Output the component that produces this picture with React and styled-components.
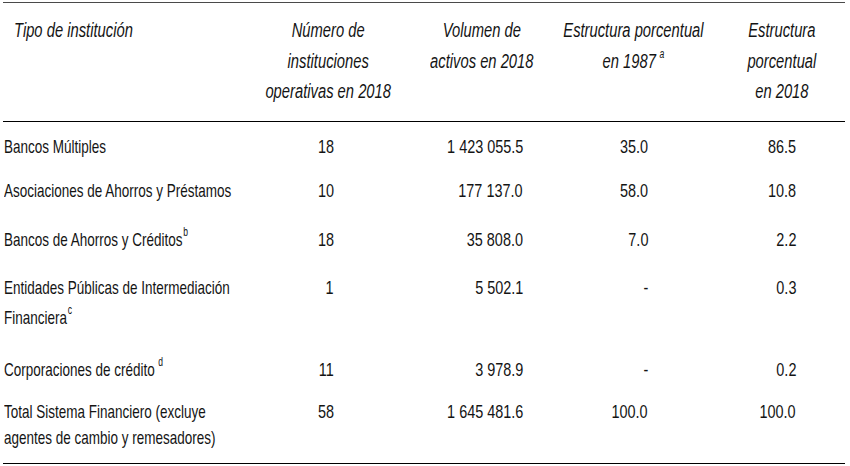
import React from "react";
import styled, { createGlobalStyle } from "styled-components";

const GlobalStyle = createGlobalStyle`
  body {
    margin: 0;
    background: #ffffff;
    color: #141414;
    font-family: "Liberation Sans", Arial, sans-serif;
  }
`;

const COLS = "250px 150px 164px 132px 146px";

const Table = styled.div`
  width: 842px;
  padding: 2px 5px 0 3px;
`;

const HeaderRow = styled.div`
  display: grid;
  grid-template-columns: ${COLS};
  border-top: 1px solid #4a4a4a;
  border-bottom: 1px solid #000;
  padding: 12px 0 14px;
  line-height: 30.5px;
  font-size: 20.5px;
  font-style: italic;
`;

const HeadCell = styled.div`
  display: flex;
  align-items: flex-start;
  justify-content: ${(p) => (p.$align === "left" ? "flex-start" : "center")};
  text-align: ${(p) => p.$align || "center"};
  padding-left: ${(p) => p.$pl || 0}px;
  padding-right: ${(p) => p.$pr || 0}px;
  min-width: 0;
`;

// condensed face: the table is set in a narrow grotesque
const Squeeze = styled.span`
  display: inline-block;
  flex-shrink: 0;
  white-space: nowrap;
  transform: scaleX(${(p) => p.$sx || 0.71});
  transform-origin: ${(p) => p.$origin || "center"};
`;

const Body = styled.div`
  border-bottom: 1px solid #000;
`;

const Row = styled.div`
  display: grid;
  grid-template-columns: ${COLS};
  padding: ${(p) => p.$pt}px 0 ${(p) => p.$pb}px;
  line-height: ${(p) => p.$lh || 26}px;
  font-size: 19px;
`;

const Name = styled.div`
  padding-left: 1px;
`;

const Num = styled.div`
  text-align: right;
  padding-right: ${(p) => p.$pr}px;
`;

const Sup = styled.sup`
  font-size: 12px;
  line-height: 0;
  vertical-align: 0;
  position: relative;
  top: -0.8em;
  margin-left: ${(p) => (p.$gap ? 5 : 1)}px;
`;

const PADS = [69, 44, 51, 49];

const rows = [
  { name: "Bancos Múltiples", vals: ["18", "1 423 055.5", "35.0", "86.5"], pt: 12, pb: 6 },
  { name: "Asociaciones de Ahorros y Préstamos", vals: ["10", "177 137.0", "58.0", "10.8"], pt: 12, pb: 11 },
  {
    name: (
      <>
        Bancos de Ahorros y Créditos<Sup>b</Sup>
      </>
    ),
    vals: ["18", "35 808.0", "7.0", "2.2"],
    pt: 12,
    pb: 10,
  },
  {
    name: (
      <>
        Entidades Públicas de Intermediación
        <br />
        Financiera<Sup>c</Sup>
      </>
    ),
    vals: ["1", "5 502.1", "-", "0.3"],
    pt: 10,
    pb: 12,
    lh: 30,
  },
  {
    name: (
      <>
        Corporaciones de crédito<Sup $gap>d</Sup>
      </>
    ),
    vals: ["11", "3 978.9", "-", "0.2"],
    pt: 12,
    pb: 4,
  },
  {
    name: (
      <>
        Total Sistema Financiero (excluye
        <br />
        agentes de cambio y remesadores)
      </>
    ),
    vals: ["58", "1 645 481.6", "100.0", "100.0"],
    pt: 12,
    pb: 12,
  },
];

export default function App() {
  return (
    <Table>
      <GlobalStyle />
      <HeaderRow>
        <HeadCell $align="left" $pl={11}>
          <Squeeze $sx={0.72} $origin="left">
            Tipo de institución
          </Squeeze>
        </HeadCell>
        <HeadCell>
          <Squeeze $sx={0.72}>
            Número de
            <br />
            instituciones
            <br />
            operativas en 2018
          </Squeeze>
        </HeadCell>
        <HeadCell $pr={6}>
          <Squeeze $sx={0.72}>
            Volumen de
            <br />
            activos en 2018
          </Squeeze>
        </HeadCell>
        <HeadCell>
          <Squeeze $sx={0.72}>
            Estructura porcentual
            <br />
            en 1987<Sup $gap>a</Sup>
          </Squeeze>
        </HeadCell>
        <HeadCell $pl={20}>
          <Squeeze $sx={0.72}>
            Estructura
            <br />
            porcentual
            <br />
            en 2018
          </Squeeze>
        </HeadCell>
      </HeaderRow>
      <Body>
        {rows.map((r, i) => (
          <Row key={i} $pt={r.pt} $pb={r.pb} $lh={r.lh}>
            <Name>
              <Squeeze $origin="left">{r.name}</Squeeze>
            </Name>
            {r.vals.map((v, j) => (
              <Num key={j} $pr={PADS[j]}>
                <Squeeze $sx={0.76} $origin="right">{v}</Squeeze>
              </Num>
            ))}
          </Row>
        ))}
      </Body>
    </Table>
  );
}
